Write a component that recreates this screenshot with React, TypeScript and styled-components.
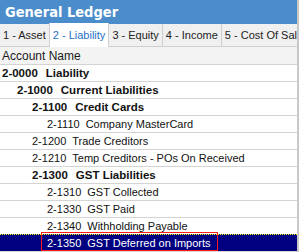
import styled, { createGlobalStyle } from "styled-components";

const GlobalStyle = createGlobalStyle`
  html, body {
    margin: 0;
    padding: 0;
    background: #ffffff;
  }
  body {
    font-family: "Liberation Sans", Arial, sans-serif;
  }
`;

type Account = {
  code: string;
  name: string;
  level: number;
  bold?: boolean;
  selected?: boolean;
};

const tabs = ["1 - Asset", "2 - Liability", "3 - Equity", "4 - Income", "5 - Cost Of Sales"];

const accounts: Account[] = [
  { code: "2-0000", name: "Liability", level: 0, bold: true },
  { code: "2-1000", name: "Current Liabilities", level: 1, bold: true },
  { code: "2-1100", name: "Credit Cards", level: 2, bold: true },
  { code: "2-1110", name: "Company MasterCard", level: 3 },
  { code: "2-1200", name: "Trade Creditors", level: 2 },
  { code: "2-1210", name: "Temp Creditors - POs On Received", level: 2 },
  { code: "2-1300", name: "GST Liabilities", level: 2, bold: true },
  { code: "2-1310", name: "GST Collected", level: 3 },
  { code: "2-1330", name: "GST Paid", level: 3 },
  { code: "2-1340", name: "Withholding Payable", level: 3 },
  { code: "2-1350", name: "GST Deferred on Imports", level: 3, selected: true },
];

const App = () => {
  return (
    <Frame>
      <GlobalStyle />
      <TitleBar>General Ledger</TitleBar>
      <TabStrip>
        {tabs.map((t, i) => (
          <Tab key={t} $active={i === 1}>
            {t}
          </Tab>
        ))}
      </TabStrip>
      <HeaderRow>Account Name</HeaderRow>
      {accounts.map((a) => (
        <Row key={a.code} $selected={a.selected}>
          <Cell $level={a.level} $bold={a.bold} $selected={a.selected}>
            <span>{a.code}</span>
            <span>{a.name}</span>
          </Cell>
        </Row>
      ))}
    </Frame>
  );
};

const Frame = styled.div`
  width: 299px;
  height: 252px;
  overflow: hidden;
  box-sizing: border-box;
  border-right: 2px solid #c8c8c8;
  background: #ffffff;
`;

const TitleBar = styled.div`
  height: 24px;
  background: #4b8ccb;
  color: #ffffff;
  font-family: "DejaVu Sans Condensed", "DejaVu Sans", sans-serif;
  font-weight: bold;
  font-size: 14.5px;
  line-height: 25px;
  padding-left: 5px;
  white-space: nowrap;
`;

const TabStrip = styled.div`
  display: flex;
  height: 22px;
  background: #f0f0f0;
  border-bottom: 1px solid #cfcfcf;
  white-space: nowrap;
`;

const Tab = styled.div<{ $active?: boolean }>`
  flex: none;
  padding: 0 3px;
  font-size: 11px;
  color: ${(p) => (p.$active ? "#1f6fc4" : "#222222")};
  background: ${(p) => (p.$active ? "#ffffff" : "#f0f0f0")};
  border-right: 1px solid #cfcfcf;
  border-left: ${(p) => (p.$active ? "1px solid #cfcfcf" : "none")};
  margin-left: ${(p) => (p.$active ? "-1px" : "0")};
  margin-top: ${(p) => (p.$active ? "-1px" : "0")};
  margin-bottom: ${(p) => (p.$active ? "-1px" : "0")};
  line-height: ${(p) => (p.$active ? "24px" : "23px")};
`;

const HeaderRow = styled.div`
  height: 17px;
  background: #f3f3f3;
  border-bottom: 1px solid #d4d4d4;
  font-size: 12px;
  line-height: 18px;
  padding-left: 2px;
  color: #1a1a1a;
`;

const Row = styled.div<{ $selected?: boolean }>`
  height: 16px;
  display: flex;
  align-items: stretch;
  background: ${(p) => (p.$selected ? "#000080" : "#ffffff")};
  border-bottom: 1px solid #d4d4d4;
  border-top: ${(p) => (p.$selected ? "1px dotted #ffff00" : "none")};
  margin-top: ${(p) => (p.$selected ? "-1px" : "0")};
  white-space: nowrap;
`;

const Cell = styled.div<{ $level: number; $bold?: boolean; $selected?: boolean }>`
  position: relative;
  display: flex;
  gap: ${(p) => (p.$bold ? "8px" : "6px")};
  align-items: center;
  margin-left: ${(p) => 2 + p.$level * 15}px;
  font-size: ${(p) => (p.$bold ? "11.5px" : "11px")};
  font-weight: ${(p) => (p.$bold ? "bold" : "normal")};
  color: ${(p) => (p.$selected ? "#ffffff" : "#111111")};

  &::after {
    content: "";
    display: ${(p) => (p.$selected ? "block" : "none")};
    position: absolute;
    left: -6px;
    right: -7px;
    top: -3px;
    bottom: 0;
    border: 1px solid #ff1a1a;
  }
`;

export default App;
